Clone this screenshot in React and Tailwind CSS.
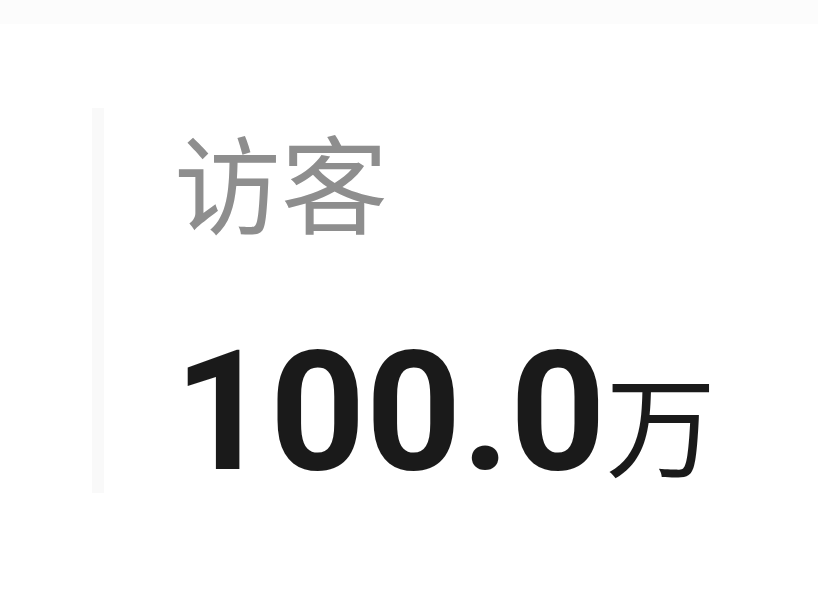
export default function App() {
  return (
    <div className="w-[818px] h-[602px] bg-white overflow-hidden flex flex-col">
      <div className="h-[24px] bg-[#fcfcfc]" />
      <div className="flex pl-[92px] pt-[84px]">
        <div className="w-[12px] h-[385px] bg-[#f9f9f9]" />
        <div className="ml-[70px] flex flex-col">
          <div
            className="text-[107px] leading-none text-[#8e8e8e] mt-[18px]"
            style={{ fontFamily: '"Noto Sans CJK SC", sans-serif' }}
          >
            访客
          </div>
          <div className="flex items-baseline mt-[96px] text-[#1a1a1a]">
            <span
              className="text-[167px] leading-none font-bold"
              style={{ fontFamily: 'Roboto, "Noto Sans CJK SC", sans-serif' }}
            >
              100.0
            </span>
            <span
              className="text-[110px] leading-none"
              style={{ fontFamily: '"Noto Sans CJK SC", sans-serif' }}
            >
              万
            </span>
          </div>
        </div>
      </div>
    </div>
  );
}
